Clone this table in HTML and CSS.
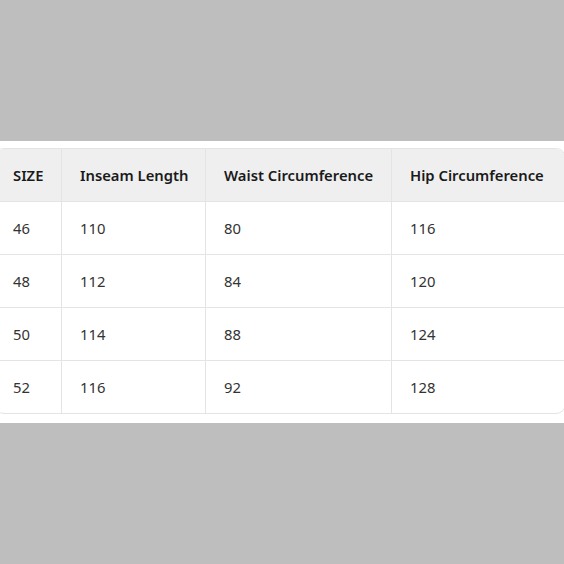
FILE: index.html
```html
<!DOCTYPE html>
<html>
<head>
<meta charset="utf-8">
<link rel="stylesheet" href="styles.css">
</head>
<body>
<div class="band">
  <table class="size-table">
    <colgroup>
      <col class="c1"><col class="c2"><col class="c3"><col class="c4">
    </colgroup>
    <thead>
      <tr><th>SIZE</th><th>Inseam Length</th><th>Waist Circumference</th><th>Hip Circumference</th></tr>
    </thead>
    <tbody>
      <tr><td>46</td><td>110</td><td>80</td><td>116</td></tr>
      <tr><td>48</td><td>112</td><td>84</td><td>120</td></tr>
      <tr><td>50</td><td>114</td><td>88</td><td>124</td></tr>
      <tr><td>52</td><td>116</td><td>92</td><td>128</td></tr>
    </tbody>
  </table>
</div>
</body>
</html>
```
FILE: styles.css
```css
html, body {
  margin: 0;
  padding: 0;
  background: #bebebe;
  height: 100%;
  overflow: hidden;
}
.band {
  margin-top: 141px;
  height: 282px;
  box-sizing: border-box;
  padding: 7px 0 10px;
  background: #ffffff;
}
.size-table {
  margin-left: -6px;
  width: 570px;
  table-layout: fixed;
  border-collapse: separate;
  border-spacing: 0;
  border: 1px solid #e4e4e4;
  border-radius: 10px;
  overflow: hidden;
  font-family: "Noto Sans", "Open Sans", sans-serif;
  font-size: 14.8px;
  color: #333333;
}
.c1 { width: 67px; }
.c2 { width: 144px; }
.c3 { width: 186px; }
.c4 { width: 173px; }
.size-table th, .size-table td {
  text-align: left;
  padding: 0 0 1px 18px;
  box-sizing: border-box;
  border-right: 1px solid #e4e4e4;
  border-bottom: 1px solid #e4e4e4;
}
.size-table th:last-child, .size-table td:last-child { border-right: none; }
.size-table th {
  height: 53px;
  background: #efefef;
  font-weight: 600;
  color: #1a1a1a;
}
.size-table td {
  height: 53px;
}
.size-table tbody tr:last-child td {
  border-bottom: none;
  height: 52px;
}
```
